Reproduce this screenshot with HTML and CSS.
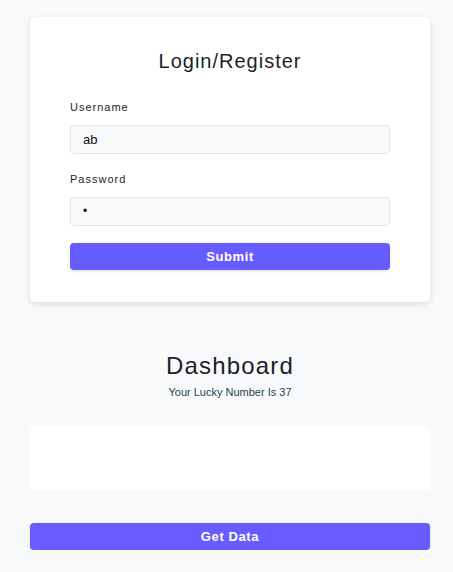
FILE: index.html
```html
<!DOCTYPE html>
<html>
<head>
<meta charset="utf-8">
<link rel="stylesheet" href="styles.css">
</head>
<body>
<div class="page">
  <section class="card">
    <h1 class="card-title">Login/Register</h1>
    <div class="field">
      <label class="label">Username</label>
      <div class="input">ab</div>
    </div>
    <div class="field">
      <label class="label">Password</label>
      <div class="input input-pw">•</div>
    </div>
    <button class="btn">Submit</button>
  </section>
  <section class="dash">
    <h2 class="dash-title">Dashboard</h2>
    <p class="dash-sub">Your Lucky Number Is 37</p>
  </section>
  <div class="data-box"></div>
  <button class="btn btn-wide">Get Data</button>
</div>
</body>
</html>
```
FILE: styles.css
```css
html, body {
  margin: 0;
  padding: 0;
  background: #f8f9fb;
  font-family: "Liberation Sans", Arial, sans-serif;
  color: #1b1f2a;
}
.page {
  width: 400px;
  margin-left: 30px;
  padding-top: 17px;
  display: flex;
  flex-direction: column;
}
.card {
  background: #fff;
  border-radius: 5px;
  box-shadow: 0 2px 6px rgba(0, 0, 0, 0.12);
  padding: 32px 40px 32px;
  display: flex;
  flex-direction: column;
}
.card-title {
  margin: 0 0 26px;
  font-size: 20px;
  line-height: 24px;
  font-weight: 400;
  letter-spacing: 1px;
  text-align: center;
  color: #1b1f2a;
}
.field {
  display: flex;
  flex-direction: column;
  margin-bottom: 17px;
}
.label {
  font-size: 11px;
  line-height: 16px;
  letter-spacing: 1px;
  color: #1b1f2a;
  margin-bottom: 10px;
}
.input {
  height: 27px;
  border: 1px solid #e3e7ec;
  border-radius: 4px;
  background: #f8f9fb;
  padding: 0 12px;
  font-size: 13px;
  line-height: 27px;
  color: #111;
}
.input-pw {
  font-size: 12px;
}
.btn {
  height: 27px;
  border: none;
  border-radius: 4px;
  background: #665cff;
  color: #fff;
  font-family: "Liberation Sans", Arial, sans-serif;
  font-size: 13px;
  font-weight: 700;
  letter-spacing: 0.6px;
  box-shadow: 0 1px 3px rgba(0, 0, 0, 0.15);
  padding: 0;
  width: 100%;
}
.dash {
  margin-top: 50px;
  text-align: center;
}
.dash-title {
  margin: 0;
  font-size: 24px;
  line-height: 28px;
  font-weight: 400;
  letter-spacing: 1.2px;
  color: #1b1f2a;
}
.dash-sub {
  margin: 6px 0 0;
  font-size: 11px;
  line-height: 13px;
  color: #1f4455;
}
.data-box {
  margin-top: 27px;
  height: 64px;
  background: #fff;
  border-radius: 5px;
}
.btn-wide {
  margin-top: 33px;
}
```
